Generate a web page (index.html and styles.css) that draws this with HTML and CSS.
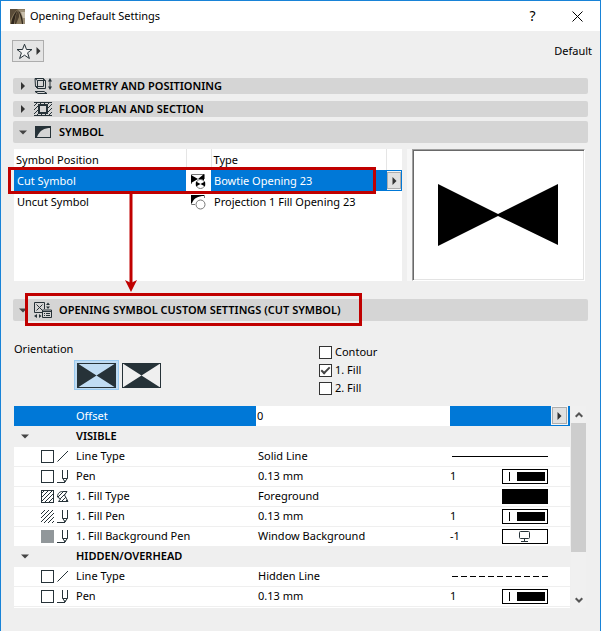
FILE: index.html
```html
<!DOCTYPE html>
<html lang="en">
<head>
<meta charset="utf-8">
<title>Opening Default Settings</title>
<link rel="stylesheet" href="styles.css">
</head>
<body>
<svg class="defs" aria-hidden="true">
  <defs>
    <pattern id="hatch" width="4" height="4" patternUnits="userSpaceOnUse">
      <path d="M-1 1L1 -1M0 4L4 0M3 5L5 3" stroke="#263238" stroke-width="1" fill="none"/>
    </pattern>
    <symbol id="right" viewBox="0 0 5 8"><path d="M0.500 0L4.500 4L0.500 8Z" fill="#333"/></symbol>
    <symbol id="down" viewBox="0 0 8 5"><path d="M0 0.500H8L4 4.500Z" fill="#444"/></symbol>
    <symbol id="box" viewBox="0 0 13 13"><rect x=".5" y=".5" width="12" height="12" fill="#fff" stroke="#263238"/></symbol>
    <symbol id="hatchbox" viewBox="0 0 13 13"><rect x=".5" y=".5" width="12" height="12" fill="url(#hatch)" stroke="#263238"/></symbol>
    <symbol id="hatchonly" viewBox="0 0 13 13"><rect width="13" height="13" fill="url(#hatch)"/></symbol>
    <symbol id="greybox" viewBox="0 0 13 13"><rect width="13" height="13" fill="#91979a"/></symbol>
    <symbol id="line" viewBox="0 0 12 13"><path d="M.5 11.500L11 1" stroke="#263238" fill="none"/></symbol>
    <symbol id="pen" viewBox="0 0 12 13"><path d="M5.500 0V8L8 12L10.500 8V0M5.500 8.500H10.500M0 12.500H8" stroke="#263238" fill="none"/><path d="M7 10.500H9L8 12.500Z" fill="#263238"/></symbol>
    <symbol id="fill" viewBox="0 0 12 13"><path d="M.5 7C.5 3 3 1.500 5.500 1.500H10L7.500 5L11 11.500H1.500L3.500 9Z" fill="url(#hatch)" stroke="#263238"/></symbol>
    <symbol id="penbox" viewBox="0 0 46 15"><rect x=".5" y=".5" width="45" height="14" fill="#fff" stroke="#000"/><path d="M7.500 3V12" stroke="#000"/><rect x="15" y="3" width="28" height="9"/></symbol>
  </defs>
</svg>

<main class="dialog">
  <header class="titlebar">
    <svg class="app-icon" width="15" height="15" viewBox="0 0 15 15" aria-hidden="true">
      <rect width="15" height="15" fill="#8a7a5e"/>
      <path d="M0 0H8C4 3 2 7 0 12Z" fill="#5a4c39"/>
      <path d="M8 1H15V15H13C13 9 11 4 8 1Z" fill="#9c8f78"/>
      <path d="M11 3H15V9H13Z" fill="#c9bfac"/>
      <path d="M1 15C2 9 4 4 8 1C5 6 5 10 4 15Z" fill="#2f261c"/>
      <path d="M5 15C5 9 6 4 8 2C9 4 9 6 9 8L6 15Z" fill="#4a3d2d"/>
      <path d="M8 1C11 4 13 9 13 15H12C11 9 10 5 8 1Z" fill="#2f261c"/>
    </svg>
    <h1 class="title">Opening Default Settings</h1>
    <button class="window-button help" type="button" aria-label="Help">?</button>
    <button class="window-button" type="button" aria-label="Close">
      <svg width="11" height="11" viewBox="0 0 11 11"><path d="M.5 .5L10.500 10.500M10.500 .5L.5 10.500" stroke="#000" fill="none"/></svg>
    </button>
  </header>

  <div class="content">
    <div class="toolbar">
      <button class="favorites" type="button" aria-label="Favorites">
        <svg width="17" height="17" viewBox="0 0 17 17"><path d="M8.500 1.200L10.500 6.500H16L11.600 9.800L13.400 15.500L8.500 12.200L3.600 15.500L5.400 9.800L1 6.500H6.500Z" fill="#f3f3f3" stroke="#263238"/></svg>
        <svg width="5" height="8"><use href="#right"/></svg>
      </button>
      <span>Default</span>
    </div>

    <button class="section geometry" type="button" aria-expanded="false">
      <svg width="8" height="8"><use href="#right"/></svg>
      <svg width="18" height="16" viewBox="0 0 18 16"><g fill="none" stroke="#263238"><path d="M1 .5H9.500L11.500 3V10.500H3.500L1.500 8.500ZM1 .5L3.500 2.500H11.500M3.500 2.500V10.500M9.500 .5V8.500H1.500M1 13.500H10L13 15.500H4Z"/><path d="M16 2V10"/></g><path d="M16 0L18 3.500H14ZM16 12L14 8.500H18Z" fill="#263238"/></svg>
      Geometry and Positioning
    </button>
    <button class="section floor" type="button" aria-expanded="false">
      <svg width="8" height="8"><use href="#right"/></svg>
      <svg width="18" height="14" viewBox="0 0 18 14"><rect width="18" height="14" fill="url(#hatch)"/><path d="M0 .5H18M0 13.500H18" stroke="#263238"/><rect x="5" y="3" width="8" height="8" fill="#d5d5d5" stroke="#263238" stroke-width="2"/></svg>
      Floor Plan and Section
    </button>
    <button class="section open" type="button" aria-expanded="true">
      <svg width="8" height="5"><use href="#down"/></svg>
      <svg width="18" height="12" viewBox="0 0 18 12"><rect x="1.500" y=".5" width="15" height="11" fill="none" stroke="#263238"/><path d="M1 0H17V2C10 2 6 4 3 11L1 12Z" fill="#263238"/></svg>
      Symbol
    </button>

    <div class="symbol-panel">
      <div class="symbol-list">
        <table class="symbols">
          <colgroup><col class="position"><col class="glyph"><col><col class="more"></colgroup>
          <thead><tr><th>Symbol Position</th><th></th><th>Type</th><th></th></tr></thead>
          <tbody>
            <tr class="selected">
              <td>Cut Symbol</td>
              <td class="icon-cell"><svg width="16" height="16" viewBox="0 0 16 16"><path d="M1.500 11V1.500H14.500V6" stroke="#777" fill="none"/><path d="M1 2L8 6L14 1V8L8 6L1 10Z"/><circle cx="10.500" cy="11" r="4.500" fill="#fff" stroke="#777"/><path d="M6 8.500L10.500 11L15 8.500V13.500L10.500 11L6 13.500Z"/></svg></td>
              <td>Bowtie Opening 23</td>
              <td class="more-cell"><button class="popup" type="button" aria-label="Choose type"><svg width="5" height="8"><use href="#right"/></svg></button></td>
            </tr>
            <tr>
              <td>Uncut Symbol</td>
              <td class="icon-cell"><svg width="16" height="16" viewBox="0 0 16 16"><path d="M1.500 10.500V1.500H14.500V4M1.500 10.500H5" stroke="#777" fill="none"/><path d="M1 1H14V2C8 2 4 4 2 9H1Z"/><circle cx="10.500" cy="10.500" r="4.500" fill="#fff" stroke="#777"/></svg></td>
              <td>Projection 1 Fill Opening 23</td><td></td>
            </tr>
          </tbody>
        </table>
      </div>
      <div class="preview-frame">
        <div class="preview">
          <svg width="120" height="62" viewBox="0 0 120 62" role="img" aria-label="Bowtie symbol"><path d="M0 0L60 30L120 0V61L60 32L0 62Z"/></svg>
        </div>
      </div>
      <div class="mark mark-row"></div>
      <svg class="mark-arrow" width="12" height="98" viewBox="0 0 12 98" aria-hidden="true"><path d="M6 0V91" stroke="#c00000" stroke-width="3"/><path d="M0 86L6 89L12 86L6 98Z" fill="#c00000"/></svg>
    </div>

    <div class="marked">
      <button class="section open" type="button" aria-expanded="true">
        <svg width="8" height="5"><use href="#down"/></svg>
        <svg width="18" height="17" viewBox="0 0 18 17"><path d="M8 10.500H.5V.5H10.500V7M2.500 2.500L8.500 8.500M8.500 2.500L2.500 8.500M8.500 8H17.500V15.500H8.500ZM8.500 9.500H17.500M10 11.500H11M12 11.500H16M10 13.500H11M12 13.500H16" stroke="#263238" fill="none"/><path d="M12 3L14 .5L16 3ZM12 4.500H16L14 7ZM3 12V16L0 14ZM5 12L7.500 14L5 16Z" fill="#263238"/></svg>
        Opening Symbol Custom Settings (Cut Symbol)
      </button>
      <div class="mark mark-section"></div>
    </div>

    <div class="options">
      <div class="orientation">
        <span>Orientation</span>
        <div class="orientation-buttons">
          <button class="orient chosen" type="button" aria-label="Horizontal" aria-pressed="true"><svg width="39" height="25" viewBox="0 0 39 25"><rect x=".5" y=".5" width="38" height="24" fill="none" stroke="#263238"/><path d="M0 0L19.500 12.500L39 0V25L19.500 12.500L0 25Z" fill="#263238"/></svg></button>
          <button class="orient" type="button" aria-label="Vertical" aria-pressed="false"><svg width="39" height="25" viewBox="0 0 39 25"><rect x=".5" y=".5" width="38" height="24" fill="none" stroke="#263238"/><path d="M0 0H39L19.500 12.500L39 25H0L19.500 12.500Z" fill="#263238"/></svg></button>
        </div>
      </div>
      <div class="checks">
        <label><input type="checkbox">Contour</label>
        <label><input type="checkbox" checked>1. Fill</label>
        <label><input type="checkbox">2. Fill</label>
      </div>
    </div>

    <div class="parameters">
      <div class="table-view">
        <table class="params">
          <colgroup><col class="icons"><col class="name"><col><col class="number"><col class="sample"></colgroup>
          <tbody>
            <tr class="selected"><td></td><td><label for="offset">Offset</label></td><td class="edit"><input id="offset" type="text" value="0"></td><td></td><td class="more-cell"><button class="popup" type="button" aria-label="Offset options"><svg width="5" height="8"><use href="#right"/></svg></button></td></tr>
            <tr class="group"><td><svg class="group-caret" width="8" height="5"><use href="#down"/></svg></td><th colspan="4">Visible</th></tr>
            <tr><td class="kind"><svg width="13" height="13"><use href="#box"/></svg><svg width="12" height="13"><use href="#line"/></svg></td><td>Line Type</td><td>Solid Line</td><td colspan="2" class="stroke"><svg width="96" height="1"><path d="M0 .5H96" stroke="#000"/></svg></td></tr>
            <tr><td class="kind"><svg width="13" height="13"><use href="#box"/></svg><svg width="12" height="13"><use href="#pen"/></svg></td><td>Pen</td><td>0.13 mm</td><td>1</td><td><svg width="46" height="15"><use href="#penbox"/></svg></td></tr>
            <tr><td class="kind"><svg width="13" height="13"><use href="#hatchbox"/></svg><svg width="12" height="13"><use href="#fill"/></svg></td><td>1. Fill Type</td><td>Foreground</td><td></td><td><svg width="46" height="15"><rect width="46" height="15"/></svg></td></tr>
            <tr><td class="kind"><svg width="13" height="13"><use href="#hatchonly"/></svg><svg width="12" height="13"><use href="#pen"/></svg></td><td>1. Fill Pen</td><td>0.13 mm</td><td>1</td><td><svg width="46" height="15"><use href="#penbox"/></svg></td></tr>
            <tr><td class="kind"><svg width="13" height="13"><use href="#greybox"/></svg><svg width="12" height="13"><use href="#pen"/></svg></td><td>1. Fill Background Pen</td><td>Window Background</td><td>-1</td><td><svg width="46" height="15" viewBox="0 0 46 15"><rect x=".5" y=".5" width="45" height="14" fill="#fff" stroke="#000"/><rect x="17.500" y="2.500" width="10" height="7" rx="1" fill="none" stroke="#263238"/><path d="M22.500 9.500V12M19 12.500H26" stroke="#263238"/></svg></td></tr>
            <tr class="group"><td><svg class="group-caret" width="8" height="5"><use href="#down"/></svg></td><th colspan="4">Hidden/Overhead</th></tr>
            <tr><td class="kind"><svg width="13" height="13"><use href="#box"/></svg><svg width="12" height="13"><use href="#line"/></svg></td><td>Line Type</td><td>Hidden Line</td><td colspan="2" class="stroke"><svg width="96" height="1"><path d="M0 .5H96" stroke="#000" stroke-dasharray="6 3"/></svg></td></tr>
            <tr><td class="kind"><svg width="13" height="13"><use href="#box"/></svg><svg width="12" height="13"><use href="#pen"/></svg></td><td>Pen</td><td>0.13 mm</td><td>1</td><td><svg width="46" height="15"><use href="#penbox"/></svg></td></tr>
          </tbody>
        </table>
      </div>
      <div class="scrollbar">
        <button type="button" aria-label="Scroll up"><svg width="8" height="6" viewBox="0 0 8 6"><path d="M.7 4.800L4 1.500L7.300 4.800" stroke="#555" stroke-width="2" fill="none"/></svg></button>
        <div class="track"><div class="thumb"></div></div>
        <button type="button" aria-label="Scroll down"><svg width="8" height="6" viewBox="0 0 8 6"><path d="M.7 1.200L4 4.500L7.300 1.200" stroke="#555" stroke-width="2" fill="none"/></svg></button>
      </div>
    </div>
  </div>
</main>
</body>
</html>
```
FILE: styles.css
```css
* { box-sizing: border-box; }

body {
  margin: 0;
  background: #efefef;
  color: #000;
  font: 11px/16px "Noto Sans", "Open Sans", sans-serif;
}

button, input { font: inherit; color: inherit; margin: 0; padding: 0; }
button { border: 0; background: none; }
svg { display: block; flex: none; }
.defs { position: absolute; width: 0; height: 0; }

.dialog {
  min-height: 100vh;
  border: 1px solid #1883d7;
  border-bottom: 0;
}

.titlebar {
  display: flex;
  align-items: center;
  height: 30px;
  padding-left: 9px;
  background: #fff;
}
.title { flex: 1; margin: 0 0 0 5px; font-size: 11px; font-weight: 400; }
.window-button {
  display: flex;
  align-items: center;
  justify-content: center;
  width: 45px;
  height: 30px;
}
.help { font-size: 14px; }

.content { padding: 9px 12px 0; }

.toolbar {
  display: flex;
  align-items: center;
  justify-content: space-between;
  margin: 0 -4px 16px -1px;
}
.favorites {
  display: flex;
  align-items: center;
  gap: 3px;
  width: 32px;
  height: 22px;
  padding-left: 3px;
  border: 1px solid #adadad;
  background: #e5e5e5;
}

.section {
  display: flex;
  align-items: center;
  gap: 7px;
  width: 100%;
  height: 16px;
  padding-left: 6px;
  border-radius: 2px;
  background: #d5d5d5;
  font-weight: 600;
  text-align: left;
  text-transform: uppercase;
}
.geometry { margin-bottom: 7px; }
.floor { margin-bottom: 4px; }
.open { height: 22px; }

.symbol-panel {
  position: relative;
  display: flex;
  gap: 5px;
  height: 132px;
  margin: 6px 3px 18px 1px;
}
.symbol-list { flex: 1; background: #fff; }
table { width: 100%; border-collapse: collapse; table-layout: fixed; }
th, td { padding: 0; font-weight: 400; text-align: left; white-space: nowrap; }
.position { width: 172px; }
.glyph { width: 25px; }
.more { width: 16px; }
.symbols tr { height: 21px; }
.symbols th { padding-left: 2px; }
.symbols td { padding-left: 3px; }
.symbols th + th { border-left: 1px solid #e5e5e5; }
.selected { background: #0078d7; color: #fff; }
.symbols .icon-cell { padding-left: 4px; background: #fff; }
.symbols .more-cell { padding: 0 0 0 1px; background: #f5f5f5; box-shadow: inset 0 0 0 1px #0078d7; }
.popup {
  display: flex;
  align-items: center;
  justify-content: center;
  width: 15px;
  height: 17px;
  border: 1px solid #adadad;
  background: #e1e1e1;
  outline: 1px solid #f5f5f5;
}
.symbols .popup { width: 14px; outline: 0; }

.preview-frame { flex: 0 0 178px; padding-left: 5px; background: #f7f7f7; }
.preview {
  display: flex;
  align-items: center;
  height: 132px;
  padding-left: 25px;
  border: 1px solid;
  border-color: #a0a0a0 #fff #fff #a0a0a0;
  background: #fff;
  box-shadow: inset 1px 1px #696969, inset -1px -1px #e3e3e3;
}

.mark { position: absolute; border: 3px solid #c00000; pointer-events: none; }
.mark-row { left: -6px; top: 18px; width: 368px; height: 27px; }
.mark-arrow { position: absolute; left: 111px; top: 45px; z-index: 1; }
.marked { position: relative; }
.mark-section { left: 12px; top: -6px; width: 337px; height: 33px; }

.options {
  display: flex;
  height: 85px;
  padding: 20px 0 0 1px;
}
.orientation { width: 305px; }
.orientation-buttons { display: flex; padding: 3px 0 0 60px; }
.orient {
  display: flex;
  align-items: center;
  justify-content: center;
  width: 45px;
  height: 30px;
}
.chosen { border: 1px solid #99c9ef; background: #c0dcf3; }
.checks { padding-top: 2px; }
.checks label { display: flex; align-items: center; gap: 3px; height: 18px; }
.checks input {
  appearance: none;
  width: 13px;
  height: 13px;
  border: 1px solid #333;
  background: #fff;
}
.checks input:checked::before {
  content: "";
  display: block;
  box-sizing: border-box;
  width: 9px;
  height: 5px;
  margin: 2px 0 0 1px;
  border: solid #444;
  border-width: 0 0 2px 2px;
  transform: rotate(-45deg);
}

.parameters { display: flex; gap: 1px; height: 202px; margin: 0 2px 0 1px; }
.table-view { flex: 1; overflow: hidden; background: #fff; }
.icons { width: 62px; }
.name { width: 180px; }
.number { width: 52px; }
.sample { width: 68px; }
.params tr { height: 20px; border-bottom: 1px solid #efefef; }
.params td:nth-child(3) { padding-left: 2px; }
.params td.edit { padding: 0; background: #fff; color: #000; }
.edit input {
  display: block;
  width: 100%;
  height: 19px;
  padding: 0 1px;
  border: 0;
  background: #fff;
}
.params .more-cell { padding-left: 50px; }
.group { background: #efefef; }
.group th { font-weight: 600; text-transform: uppercase; }
.group-caret { margin-left: 7px; }
.kind { line-height: 13px; }
.kind svg { display: inline-block; vertical-align: top; }
.kind svg:first-child { margin: 0 3px 0 27px; }
.stroke { padding-left: 2px; }

.scrollbar { display: flex; flex-direction: column; width: 15px; background: #f0f0f0; }
.scrollbar button {
  display: flex;
  align-items: center;
  justify-content: center;
  height: 17px;
}
.track { flex: 1; }
.thumb { height: 77%; background: #cdcdcd; }
```
